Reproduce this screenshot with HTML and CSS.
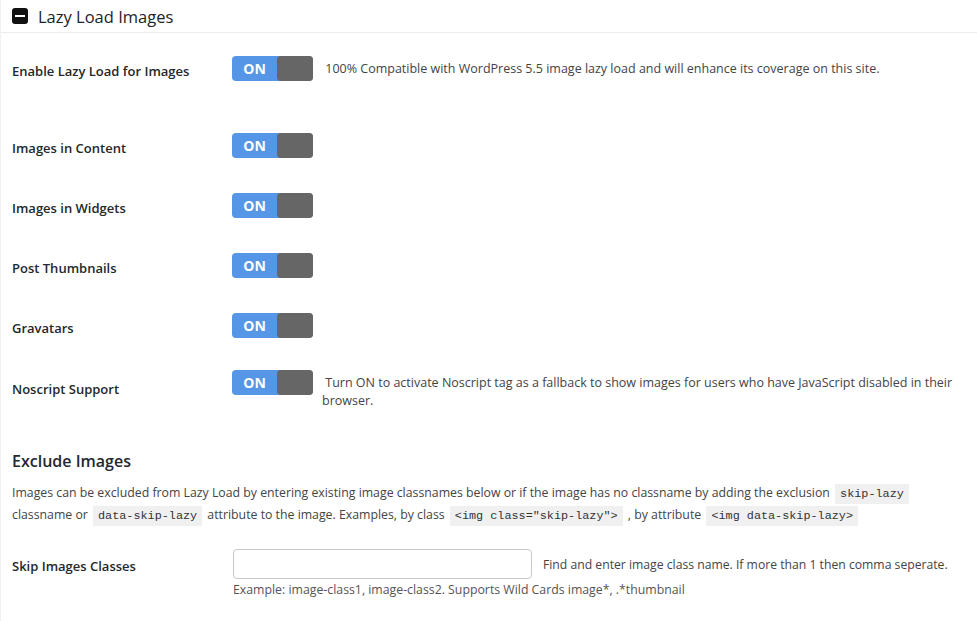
FILE: index.html
```html
<!DOCTYPE html>
<html lang="en">
<head>
    <meta charset="UTF-8">
    <title>Lazy Load Images</title>
    <link rel="stylesheet" href="styles.css">
</head>
<body>
    <div class="panel">
        <div class="panel-head">
            <span class="collapse-icon"></span>
            <h3>Lazy Load Images</h3>
        </div>

        <div class="setting row-main">
            <div class="label">Enable Lazy Load for Images</div>
            <div class="field">
                <span class="toggle"><span class="toggle-on">ON</span><span class="toggle-knob"></span></span>
                <p class="desc">&nbsp;100% Compatible with WordPress 5.5 image lazy load and will enhance its coverage on this site.</p>
            </div>
        </div>

        <div class="setting">
            <div class="label">Images in Content</div>
            <div class="field">
                <span class="toggle"><span class="toggle-on">ON</span><span class="toggle-knob"></span></span>
            </div>
        </div>

        <div class="setting">
            <div class="label">Images in Widgets</div>
            <div class="field">
                <span class="toggle"><span class="toggle-on">ON</span><span class="toggle-knob"></span></span>
            </div>
        </div>

        <div class="setting">
            <div class="label">Post Thumbnails</div>
            <div class="field">
                <span class="toggle"><span class="toggle-on">ON</span><span class="toggle-knob"></span></span>
            </div>
        </div>

        <div class="setting">
            <div class="label">Gravatars</div>
            <div class="field">
                <span class="toggle"><span class="toggle-on">ON</span><span class="toggle-knob"></span></span>
            </div>
        </div>

        <div class="setting setting-wrap">
            <div class="label">Noscript Support</div>
            <div class="field">
                <span class="toggle"><span class="toggle-on">ON</span><span class="toggle-knob"></span></span>
                <p class="desc">&nbsp;Turn ON to activate Noscript tag as a fallback to show images for users who have JavaScript disabled in their browser.</p>
            </div>
        </div>

        <h4 class="sub-title">Exclude Images</h4>
        <p class="intro">Images can be excluded from Lazy Load by entering existing image classnames below or if the image has no classname by adding the exclusion <code>skip-lazy</code> classname or <code>data-skip-lazy</code> attribute to the image. Examples, by class <code>&lt;img class="skip-lazy"&gt;</code> , by attribute <code>&lt;img data-skip-lazy&gt;</code></p>

        <div class="setting setting-input">
            <div class="label">Skip Images Classes</div>
            <div class="field field-col">
                <div class="input-line">
                    <input type="text" class="text-input">
                    <span class="hint">Find and enter image class name. If more than 1 then comma seperate.</span>
                </div>
                <p class="example">Example: image-class1, image-class2. Supports Wild Cards image*, .*thumbnail</p>
            </div>
        </div>
    </div>
</body>
</html>
```

FILE: styles.css
```css
:root {
    --blue: #5596e6;
    --knob: #666;
    --text-color: #23282d;
    --desc-color: #444;
    --line: #ececec;
}

* {
    margin: 0;
    padding: 0;
    box-sizing: border-box;
}

body {
    font-family: 'Open Sans', 'Noto Sans', sans-serif;
    color: var(--text-color);
    background: #fff;
}

.panel {
    min-height: 621px;
    border-left: 1px solid #f2f2f2;
}

.panel-head {
    display: flex;
    align-items: center;
    height: 33px;
    padding-left: 11px;
    border-bottom: 1px solid var(--line);
}

.collapse-icon {
    position: relative;
    width: 16px;
    height: 16px;
    border-radius: 3px;
    background: #111;
    margin-right: 10px;
}

.collapse-icon::after {
    content: "";
    position: absolute;
    left: 3px;
    right: 3px;
    top: 7px;
    height: 2px;
    background: #fff;
}

.panel-head h3 {
    font-size: 16.5px;
    font-weight: 400;
    color: #1d2327;
}

.setting {
    display: flex;
    padding: 17px 0 18px 11px;
}

.row-main {
    margin-top: 6px;
    margin-bottom: 17px;
}

.label {
    width: 220px;
    flex-shrink: 0;
    align-self: center;
    padding-top: 5px;
    font-size: 13px;
    font-weight: 600;
}

.setting-wrap {
    padding-top: 14px;
}

.setting-wrap .label {
    padding-top: 0;
    margin-top: -3px;
}

.field {
    flex: 1;
    display: flex;
    align-items: flex-start;
    padding-right: 20px;
}

.toggle {
    display: flex;
    width: 81px;
    height: 25px;
    border-radius: 4px;
    background: var(--blue);
    flex-shrink: 0;
    margin-right: 9px;
}

.toggle-on {
    width: 45px;
    color: #fff;
    font-size: 14px;
    font-weight: 700;
    line-height: 25px;
    text-align: center;
}

.toggle-knob {
    flex: 1;
    background: var(--knob);
    border-radius: 4px;
}

.desc {
    margin-top: 4px;
    font-size: 12.5px;
    line-height: 18px;
    color: var(--desc-color);
}

.sub-title {
    margin: 22px 0 0 11px;
    font-size: 16px;
    font-weight: 600;
}

.intro {
    margin: 10px 12px 0 11px;
    font-size: 12.3px;
    line-height: 21px;
    color: var(--desc-color);
}

code {
    display: inline-block;
    font-family: 'Liberation Mono', monospace;
    font-size: 11.8px;
    line-height: 18px;
    background: #f0f0f1;
    color: #333;
    padding: 1px 5px;
    margin: 0 2px;
}

.setting-input {
    margin-top: 5px;
    padding-top: 18px;
}

.setting-input .label {
    align-self: flex-start;
    padding-top: 8px;
}

.field-col {
    flex-direction: column;
    padding-left: 1px;
    padding-right: 8px;
}

.input-line {
    display: flex;
    align-items: center;
}

.text-input {
    width: 299px;
    height: 30px;
    border: 1px solid #c9c9c9;
    border-radius: 4px;
    margin-right: 11px;
}

.hint {
    font-size: 12.2px;
    white-space: nowrap;
    color: var(--desc-color);
}

.example {
    margin-top: 2px;
    font-size: 12.3px;
    line-height: 18px;
    color: #555;
}
```
